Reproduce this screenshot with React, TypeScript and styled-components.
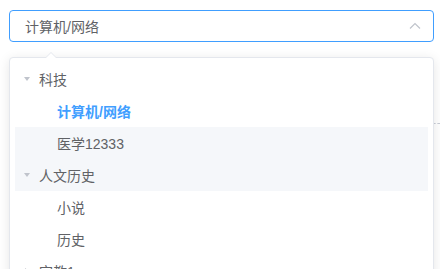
import React from "react";
import styled, { createGlobalStyle } from "styled-components";

const Global = createGlobalStyle`
  html, body { margin: 0; padding: 0; background: #fff; }
  body { font-family: "Liberation Sans", "Noto Sans CJK SC", sans-serif; font-size: 14px; color: #606266; }
`;

const Page = styled.div`
  position: relative;
  width: 440px;
  height: 269px;
  overflow: hidden;
  padding: 10px 0 0 9px;
  box-sizing: border-box;
`;

const Select = styled.div`
  position: relative;
  width: 425px;
`;

const Input = styled.div`
  box-sizing: border-box;
  height: 32px;
  border: 1px solid #409eff;
  border-radius: 4px;
  display: flex;
  align-items: center;
  justify-content: space-between;
  padding: 0 12px 0 15px;
  color: #606266;
  font-size: 14px;
`;

const Divider = styled.div`
  margin: 81px 0 0 424px;
  width: 7px;
  border-top: 1px dashed #c8ccd6;
`;

const Dropdown = styled.div`
  position: absolute;
  top: 47px;
  left: 0;
  width: 425px;
  box-sizing: border-box;
  background: #fff;
  border: 1px solid #e4e7ed;
  border-radius: 4px;
  box-shadow: 0 2px 12px 0 rgba(0, 0, 0, 0.1);
  padding: 5px 5px;
  z-index: 2;
`;

const Arrow = styled.div`
  position: absolute;
  top: -6px;
  left: 35px;
  width: 0;
  height: 0;
  border-left: 6px solid transparent;
  border-right: 6px solid transparent;
  border-bottom: 6px solid #e4e7ed;
  &::after {
    content: "";
    position: absolute;
    left: -5px;
    top: 1px;
    border-left: 5px solid transparent;
    border-right: 5px solid transparent;
    border-bottom: 5px solid #fff;
  }
`;

const Row = styled.div<{ $level: number; $hl?: boolean; $selected?: boolean }>`
  height: 32px;
  display: flex;
  align-items: center;
  padding-left: ${(p) => p.$level * 18}px;
  background: ${(p) => (p.$hl ? "#f5f7fa" : "transparent")};
  color: ${(p) => (p.$selected ? "#409eff" : "#606266")};
  font-weight: ${(p) => (p.$selected ? 700 : 400)};
  font-size: 14px;
`;

const Caret = styled.span<{ $open?: boolean; $hidden?: boolean }>`
  width: 24px;
  height: 32px;
  display: flex;
  align-items: center;
  justify-content: center;
  visibility: ${(p) => (p.$hidden ? "hidden" : "visible")};
  svg {
    transform: ${(p) => (p.$open ? "rotate(90deg)" : "none")};
  }
`;

const CaretIcon = () => (
  <svg width="8" height="8" viewBox="0 0 8 8">
    <path d="M2 1 L6 4 L2 7 Z" fill="#c0c4cc" />
  </svg>
);

type Node = { label: string; level: number; open?: boolean; leaf?: boolean; hl?: boolean; selected?: boolean };

const nodes: Node[] = [
  { label: "科技", level: 0, open: true },
  { label: "计算机/网络", level: 1, leaf: true, selected: true },
  { label: "医学12333", level: 1, leaf: true, hl: true },
  { label: "人文历史", level: 0, open: true, hl: true },
  { label: "小说", level: 1, leaf: true },
  { label: "历史", level: 1, leaf: true },
  { label: "宗教1", level: 0 },
];

export default function App() {
  return (
    <>
      <Global />
      <Page>
        <Select>
          <Input>
            <span>计算机/网络</span>
            <svg width="12" height="8" viewBox="0 0 12 8">
              <path d="M1 6.5 L6 1.5 L11 6.5" fill="none" stroke="#c0c4cc" strokeWidth="1.2" />
            </svg>
          </Input>
          <Dropdown>
            <Arrow />
            {nodes.map((n) => (
              <Row key={n.label} $level={n.level} $hl={n.hl} $selected={n.selected}>
                <Caret $open={n.open} $hidden={n.leaf}>
                  <CaretIcon />
                </Caret>
                <span>{n.label}</span>
              </Row>
            ))}
          </Dropdown>
        </Select>
        <Divider />
      </Page>
    </>
  );
}
